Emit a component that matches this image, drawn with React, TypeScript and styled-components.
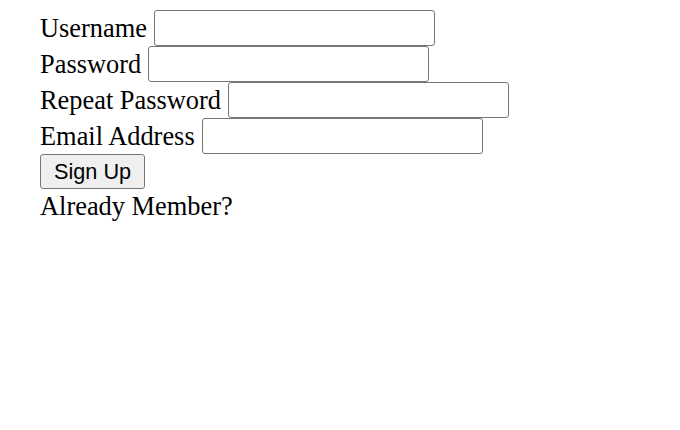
import React from "react";
import styled, { createGlobalStyle } from "styled-components";

const Global = createGlobalStyle`
  html, body { margin: 0; padding: 0; background: #ffffff; }
  body { font-family: "Liberation Serif", "Times New Roman", serif; color: #000; }
`;

const Form = styled.form`
  display: flex;
  flex-direction: column;
  align-items: flex-start;
  padding: 10px 0 0 40px;
  font-family: "Liberation Serif", "Times New Roman", serif;
  font-size: 26.4px;
`;

const Row = styled.div`
  display: flex;
  align-items: center;
  height: 36px;
`;

const Label = styled.label`
  font-size: 26.4px;
  line-height: 30px;
  margin-right: 7px;
`;

const Input = styled.input`
  box-sizing: border-box;
  width: 281px;
  height: 36px;
  margin: 0;
  padding: 2px 3px;
  border: 1px solid #767676;
  border-radius: 3px;
  background: #ffffff;
  font-family: "Liberation Sans", Arial, sans-serif;
  font-size: 21px;
`;

const Button = styled.button`
  box-sizing: border-box;
  height: 35px;
  margin: 0;
  padding: 0 13px;
  border: 1px solid #767676;
  border-radius: 3px;
  background: #efefef;
  color: #000;
  font-family: "Liberation Sans", Arial, sans-serif;
  font-size: 21.7px;
  line-height: 1;
`;

const Note = styled.div`
  font-size: 26.4px;
  line-height: 34px;
`;

export default function App() {
  return (
    <>
      <Global />
      <Form onSubmit={(e) => e.preventDefault()}>
        <Row>
          <Label>Username</Label>
          <Input type="text" />
        </Row>
        <Row>
          <Label>Password</Label>
          <Input type="password" />
        </Row>
        <Row>
          <Label>Repeat Password</Label>
          <Input type="password" />
        </Row>
        <Row>
          <Label>Email Address</Label>
          <Input type="email" />
        </Row>
        <Button type="submit">Sign Up</Button>
        <Note>Already Member?</Note>
      </Form>
    </>
  );
}
